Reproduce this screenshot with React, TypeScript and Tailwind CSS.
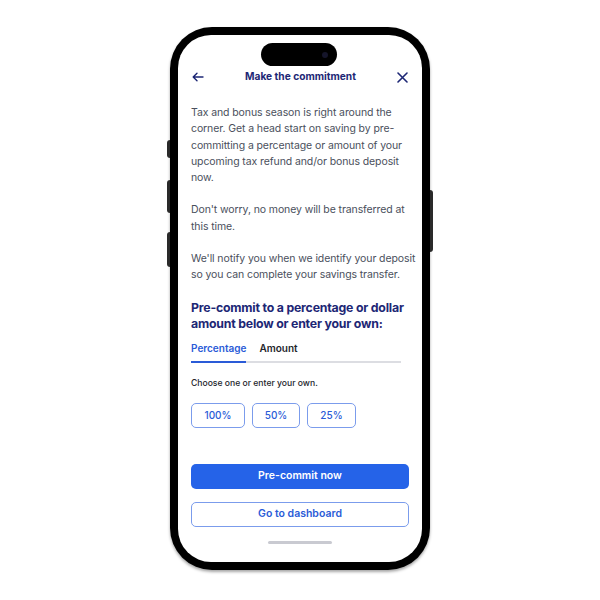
import React from 'react';

const NAVY = 'text-[#1d2775]';

const ArrowLeft = () => (
  <svg width="12" height="10" viewBox="0 0 12 10" fill="none" stroke="#1d2775" strokeWidth="1.4" strokeLinecap="round" strokeLinejoin="round">
    <path d="M11 5H1.5M5 1.2L1.2 5L5 8.8" />
  </svg>
);

const CloseX = () => (
  <svg width="11" height="11" viewBox="0 0 11 11" fill="none" stroke="#1d2775" strokeWidth="1.6" strokeLinecap="round">
    <path d="M1 1L10 10M10 1L1 10" />
  </svg>
);

const Chip = ({ label, width }: { label: string; width: string }) => (
  <button className={`${width} h-[25px] rounded-[5px] border border-[#7b9cec] text-[10px] font-medium text-[#2a5bd7]`}>
    {label}
  </button>
);

export default function App() {
  return (
    <div className="w-[600px] h-[600px] bg-white flex justify-center" style={{ fontFamily: 'Inter, "Noto Sans", sans-serif' }}>
      <div className="relative mt-[27px] w-[260px] h-[543px]">
        {/* side buttons */}
        <div className="absolute left-[-3px] top-[113px] w-[3px] h-[18px] rounded-l-sm bg-[#2a2a2a]" />
        <div className="absolute left-[-3px] top-[153px] w-[3px] h-[33px] rounded-l-sm bg-[#2a2a2a]" />
        <div className="absolute left-[-3px] top-[205px] w-[3px] h-[35px] rounded-l-sm bg-[#2a2a2a]" />
        <div className="absolute right-[-3px] top-[163px] w-[3px] h-[62px] rounded-r-sm bg-[#2a2a2a]" />

        <div className="w-full h-full rounded-[42px] bg-black p-[8px] shadow-[0_2px_3px_rgba(0,0,0,0.35)]">
          <div className="w-full h-full rounded-[33px] bg-white flex flex-col pl-[13px] pr-[13px] pt-[1px] overflow-hidden [&>*]:shrink-0">
            {/* dynamic island */}
            <div className="mt-[7px] self-center ml-[-2px] w-[76px] h-[23px] rounded-full bg-black flex items-center justify-end pr-[9px]">
              <div className="w-[6px] h-[6px] rounded-full bg-[#15152a]" />
            </div>

            {/* header */}
            <div className="h-[22px] flex items-center justify-between px-[1px]">
              <ArrowLeft />
              <span className={`text-[10.2px] font-bold ${NAVY}`}>Make the commitment</span>
              <CloseX />
            </div>

            {/* body */}
            <div className="mt-[17px] mr-[-8px] text-[10.5px] leading-[16.3px] tracking-[-0.1px] text-[#4a4f5c] flex flex-col gap-[16px]">
              <p>Tax and bonus season is right around the corner. Get a head start on saving by pre-committing a percentage or amount of your upcoming tax refund and/or bonus deposit now.</p>
              <p>Don't worry, no money will be transferred at this time.</p>
              <p>We'll notify you when we identify your deposit so you can complete your savings transfer.</p>
            </div>

            <h2 className={`mt-[16px] mr-[-4px] text-[12.3px] leading-[16.5px] font-bold tracking-[-0.2px] ${NAVY}`}>
              Pre-commit to a percentage or dollar amount below or enter your own:
            </h2>

            {/* tabs */}
            <div className="mt-[8px] flex w-[210px] border-b-2 border-[#dcdde2] text-[10px] leading-[14px] font-semibold">
              <div className="pb-[6px] mb-[-2px] border-b-2 border-[#2a5bd7] text-[#2a5bd7]">Percentage</div>
              <div className="pl-[13px] pb-[6px] text-[#23252b]">Amount</div>
            </div>

            <p className="mt-[15px] text-[8.6px] leading-[11px] font-medium text-[#23252b]">Choose one or enter your own.</p>

            <div className="mt-[14px] flex gap-[7px]">
              <Chip label="100%" width="w-[54px]" />
              <Chip label="50%" width="w-[48px]" />
              <Chip label="25%" width="w-[49px]" />
            </div>

            <button className="mt-[36px] h-[25px] w-full rounded-[5px] bg-[#2563e8] text-[10.5px] font-semibold text-white">
              Pre-commit now
            </button>
            <button className="mt-[13px] h-[25px] w-full rounded-[5px] border border-[#7b9cec] text-[10.5px] font-semibold text-[#2a5bd7]">
              Go to dashboard
            </button>

            <div className="mt-[14px] self-center w-[64px] h-[3px] rounded-full bg-[#c9cad1]" />
          </div>
        </div>
      </div>
    </div>
  );
}
